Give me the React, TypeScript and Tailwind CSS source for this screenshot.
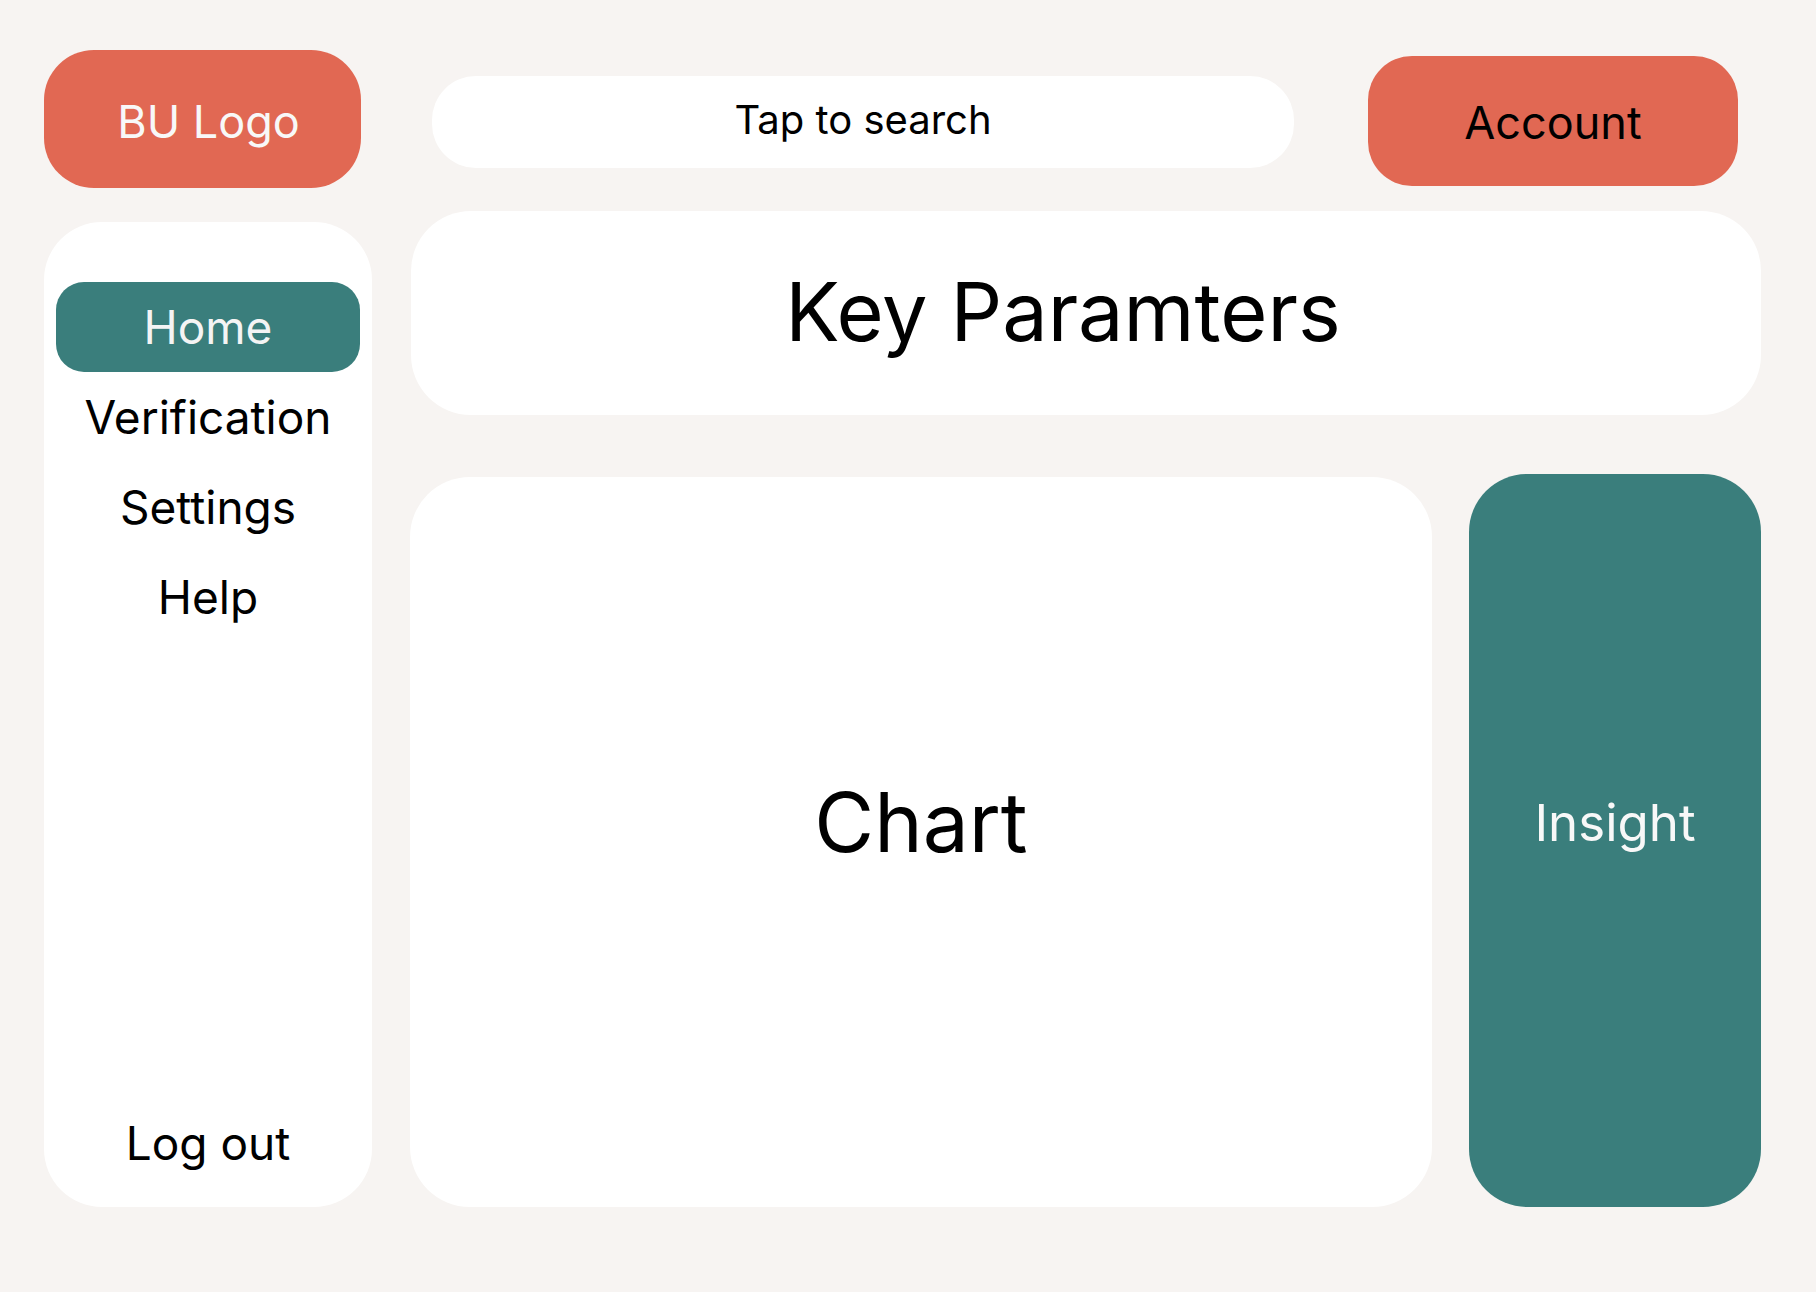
export default function App() {
  const items = ['Verification', 'Settings', 'Help'];
  return (
    <div className="w-[1816px] h-[1292px] bg-[#f7f4f2] text-black" style={{ fontFamily: 'Inter, "Noto Sans", sans-serif' }}>
      {/* Верхняя панель */}
      <div className="flex items-start">
        <div className="ml-[44px] mt-[50px] flex h-[138px] w-[317px] items-center justify-center rounded-[50px] bg-[#e16853] pt-[6px] pl-[12px] text-[45px] text-[#f8f8f8]">
          BU Logo
        </div>
        <div className="ml-[71px] mt-[76px] flex h-[92px] w-[862px] items-center justify-center rounded-[44px] bg-white pb-[4px] text-[40px]">
          Tap to search
        </div>
        <div className="ml-[74px] mt-[56px] flex h-[130px] w-[370px] items-center justify-center rounded-[44px] bg-[#e16853] pt-[4px] text-[45px]">
          Account
        </div>
      </div>

      {/* Основная часть */}
      <div className="mt-[23px] flex items-start">
        <div className="ml-[44px] mt-[11px] flex h-[985px] w-[328px] flex-col rounded-[58px] bg-white pt-[60px] pb-[19px] text-[46px]">
          <div className="mx-[12px] flex h-[90px] items-center justify-center rounded-[28px] bg-[#3a7e7c] text-[#f4f4f4]">Home</div>
          {items.map(t => (
            <div key={t} className="flex h-[90px] items-center justify-center">{t}</div>
          ))}
          <div className="mt-auto flex h-[90px] items-center justify-center">Log out</div>
        </div>

        <div className="ml-[38px] flex w-[1351px] flex-col">
          <div className="ml-[1px] flex h-[204px] items-center justify-center rounded-[60px] bg-white pr-[46px] text-[81px]">
            Key Paramters
          </div>
          <div className="mt-[59px] flex items-end gap-[37px]">
            <div className="flex h-[730px] w-[1022px] items-center justify-center rounded-[60px] bg-white pb-[40px] text-[82px]">
              Chart
            </div>
            <div className="flex h-[733px] w-[292px] items-center justify-center rounded-[58px] bg-[#3a7e7c] pb-[34px] text-[51px] text-[#f8f8f8]">
              Insight
            </div>
          </div>
        </div>
      </div>
    </div>
  );
}
